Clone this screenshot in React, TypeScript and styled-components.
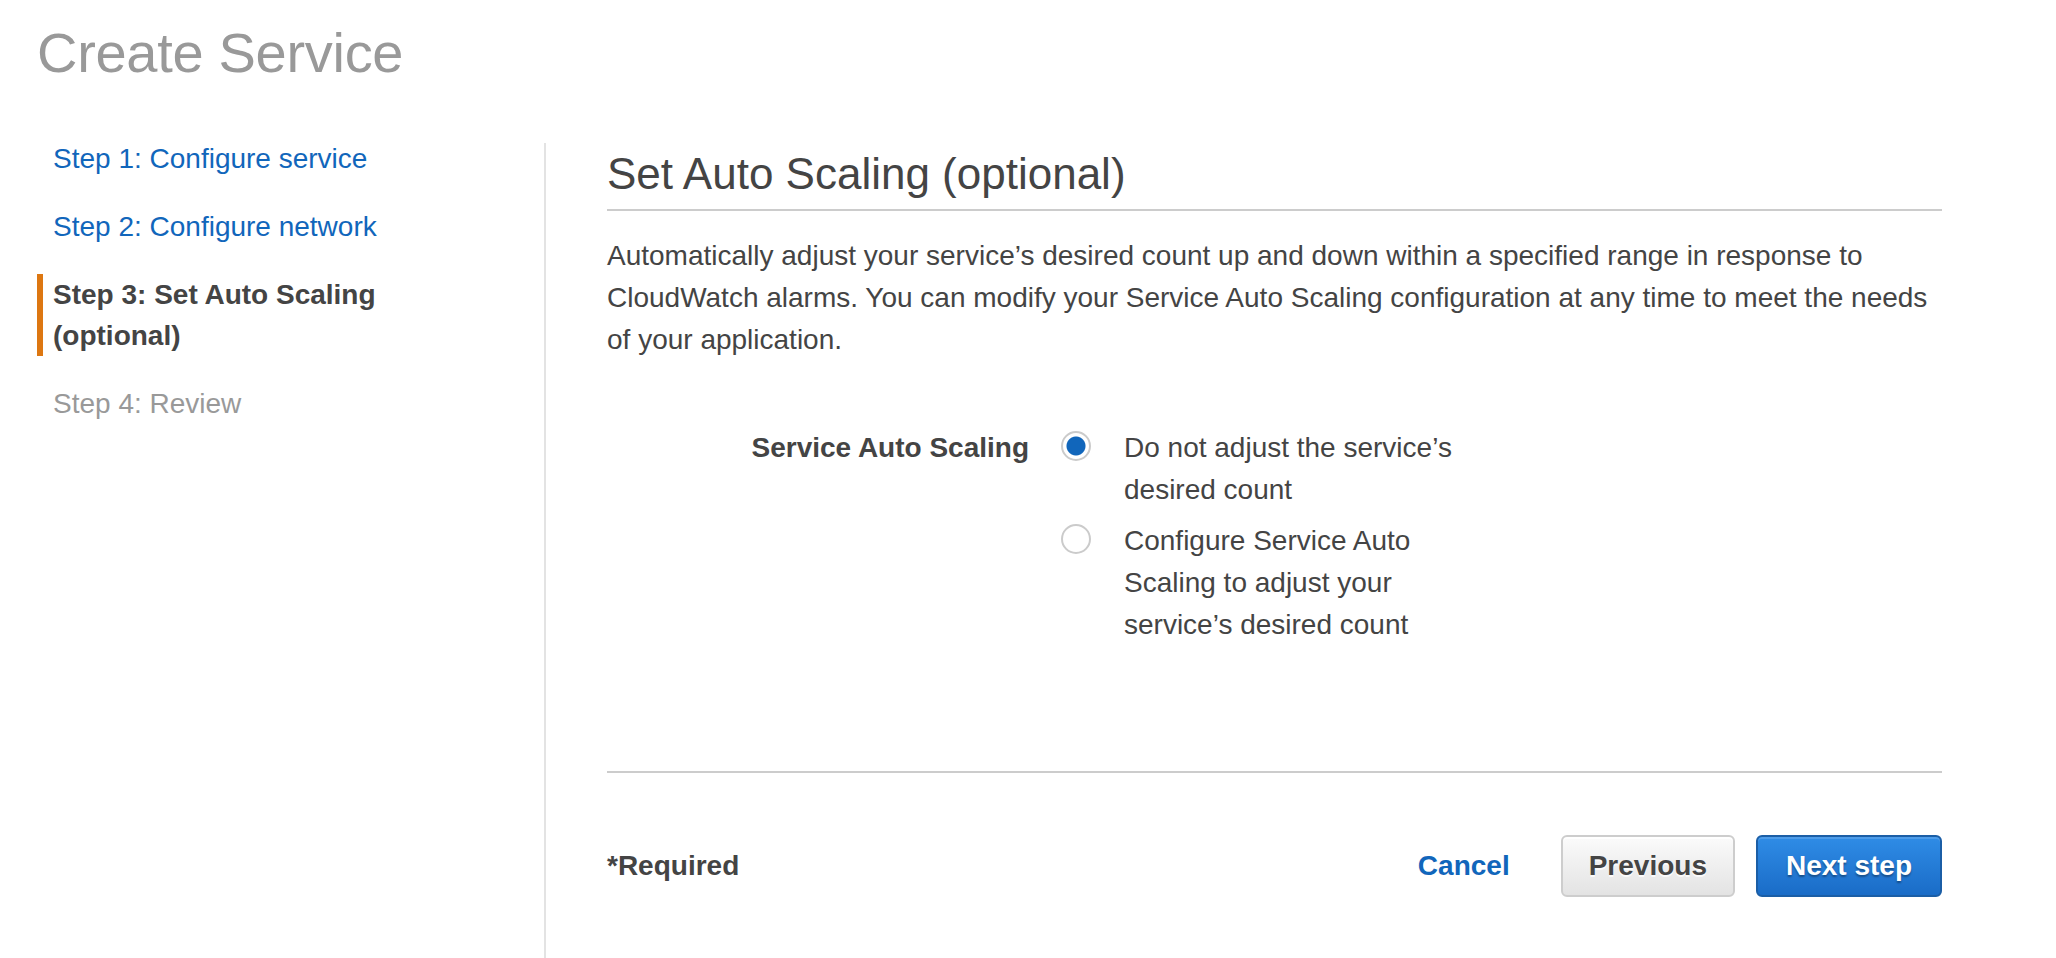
import React from 'react'
import styled, { createGlobalStyle } from 'styled-components'

const GlobalStyle = createGlobalStyle`
  html, body {
    margin: 0;
    padding: 0;
    background: #ffffff;
  }
  body {
    font-family: 'Liberation Sans', Arial, Helvetica, sans-serif;
    color: #444444;
  }
  * {
    box-sizing: border-box;
  }
`

const Page = styled.div`
  min-height: 100vh;
  padding: 0 114px 0 37px;
  display: flex;
  flex-direction: column;
`

const PageTitle = styled.h1`
  margin: 0;
  padding-top: 21px;
  font-size: 56px;
  line-height: 64px;
  font-weight: 400;
  color: #999999;
  letter-spacing: -0.3px;
`

const Body = styled.div`
  flex: 1;
  display: flex;
  margin-top: 53px;
`

const Nav = styled.nav`
  width: 507px;
  flex-shrink: 0;
  display: flex;
  flex-direction: column;
  gap: 27px;
`

const NavItem = styled.div<{ $state: 'done' | 'active' | 'todo' }>`
  padding-left: 10px;
  padding-right: 120px;
  font-size: 28px;
  line-height: 41px;
  border-left: 6px solid ${({ $state }) => ($state === 'active' ? '#dd7711' : 'transparent')};
  font-weight: ${({ $state }) => ($state === 'active' ? 700 : 400)};
  color: ${({ $state }) =>
    $state === 'done' ? '#1166bb' : $state === 'active' ? '#444444' : '#999999'};
  cursor: ${({ $state }) => ($state === 'done' ? 'pointer' : 'default')};
`

const Main = styled.main`
  flex: 1;
  margin-top: 5px;
  border-left: 2px solid #e3e3e3;
  padding-left: 61px;
  padding-top: 6px;
  display: flex;
  flex-direction: column;
`

const Heading = styled.h2`
  margin: 0;
  font-size: 44px;
  line-height: 50px;
  font-weight: 400;
  color: #444444;
  padding-bottom: 10px;
  border-bottom: 2px solid #cccccc;
`

const Intro = styled.p`
  margin: 24px 0 0;
  font-size: 28px;
  line-height: 42px;
  color: #444444;
`

const FormRow = styled.div`
  display: grid;
  grid-template-columns: 445px 1fr;
  margin-top: 66px;
`

const FieldLabel = styled.div`
  text-align: right;
  padding-right: 23px;
  font-size: 28px;
  line-height: 42px;
  font-weight: 700;
  color: #444444;
`

const Options = styled.div`
  display: flex;
  flex-direction: column;
  gap: 9px;
`

const Option = styled.label`
  display: flex;
  align-items: flex-start;
  padding-left: 9px;
  cursor: pointer;
`

const Radio = styled.span<{ $checked?: boolean }>`
  flex-shrink: 0;
  width: 30px;
  height: 30px;
  margin-top: 4px;
  border-radius: 50%;
  border: 2px solid #cbcbcb;
  background: ${({ $checked }) =>
    $checked ? 'radial-gradient(circle, #1166bb 0, #1166bb 9px, #ffffff 10px)' : '#ffffff'};
`

const OptionText = styled.span`
  width: 350px;
  margin-left: 33px;
  font-size: 28px;
  line-height: 42px;
  color: #444444;
`

const Footer = styled.div`
  margin-top: 125px;
  border-top: 2px solid #cccccc;
  padding-top: 62px;
  display: flex;
  align-items: center;
  justify-content: space-between;
`

const Required = styled.span`
  font-size: 28px;
  font-weight: 700;
  color: #444444;
`

const Actions = styled.div`
  display: flex;
  align-items: center;
  gap: 21px;
`

const CancelLink = styled.a`
  font-size: 28px;
  font-weight: 700;
  color: #1166bb;
  text-decoration: none;
  margin-right: 30px;
  cursor: pointer;
`

const Button = styled.button<{ $primary?: boolean }>`
  height: 62px;
  padding: 0 ${({ $primary }) => ($primary ? '28px' : '26px')};
  border-radius: 6px;
  font-family: inherit;
  font-size: 28px;
  font-weight: 700;
  cursor: pointer;
  border: 2px solid ${({ $primary }) => ($primary ? '#1b5ea6' : '#cdcdcd')};
  background: ${({ $primary }) =>
    $primary
      ? 'linear-gradient(to bottom, #2f8ce6 0%, #1a6cc7 100%)'
      : 'linear-gradient(to bottom, #fbfbfb 0%, #e3e3e3 100%)'};
  color: ${({ $primary }) => ($primary ? '#ffffff' : '#444444')};
  text-shadow: ${({ $primary }) =>
    $primary ? '0 2px 2px rgba(0, 0, 0, 0.35)' : '0 2px 0 rgba(255, 255, 255, 0.8)'};
  box-shadow: ${({ $primary }) =>
    $primary ? 'inset 0 2px 0 rgba(255, 255, 255, 0.15)' : 'inset 0 2px 0 #ffffff'};
`

const steps: { label: string; state: 'done' | 'active' | 'todo' }[] = [
  { label: 'Step 1: Configure service', state: 'done' },
  { label: 'Step 2: Configure network', state: 'done' },
  { label: 'Step 3: Set Auto Scaling (optional)', state: 'active' },
  { label: 'Step 4: Review', state: 'todo' },
]

export default function App() {
  const [mode, setMode] = React.useState<'none' | 'configure'>('none')

  return (
    <>
      <GlobalStyle />
      <Page>
        <PageTitle>Create Service</PageTitle>
        <Body>
          <Nav>
            {steps.map((step) => (
              <NavItem key={step.label} $state={step.state}>
                {step.label}
              </NavItem>
            ))}
          </Nav>

          <Main>
            <Heading>Set Auto Scaling (optional)</Heading>
            <Intro>
              Automatically adjust your service’s desired count up and down within a specified range in
              response to CloudWatch alarms. You can modify your Service Auto Scaling configuration at any
              time to meet the needs of your application.
            </Intro>

            <FormRow>
              <FieldLabel>Service Auto Scaling</FieldLabel>
              <Options>
                <Option onClick={() => setMode('none')}>
                  <Radio $checked={mode === 'none'} />
                  <OptionText>Do not adjust the service’s desired count</OptionText>
                </Option>
                <Option onClick={() => setMode('configure')}>
                  <Radio $checked={mode === 'configure'} />
                  <OptionText>Configure Service Auto Scaling to adjust your service’s desired count</OptionText>
                </Option>
              </Options>
            </FormRow>

            <Footer>
              <Required>*Required</Required>
              <Actions>
                <CancelLink>Cancel</CancelLink>
                <Button>Previous</Button>
                <Button $primary>Next step</Button>
              </Actions>
            </Footer>
          </Main>
        </Body>
      </Page>
    </>
  )
}
